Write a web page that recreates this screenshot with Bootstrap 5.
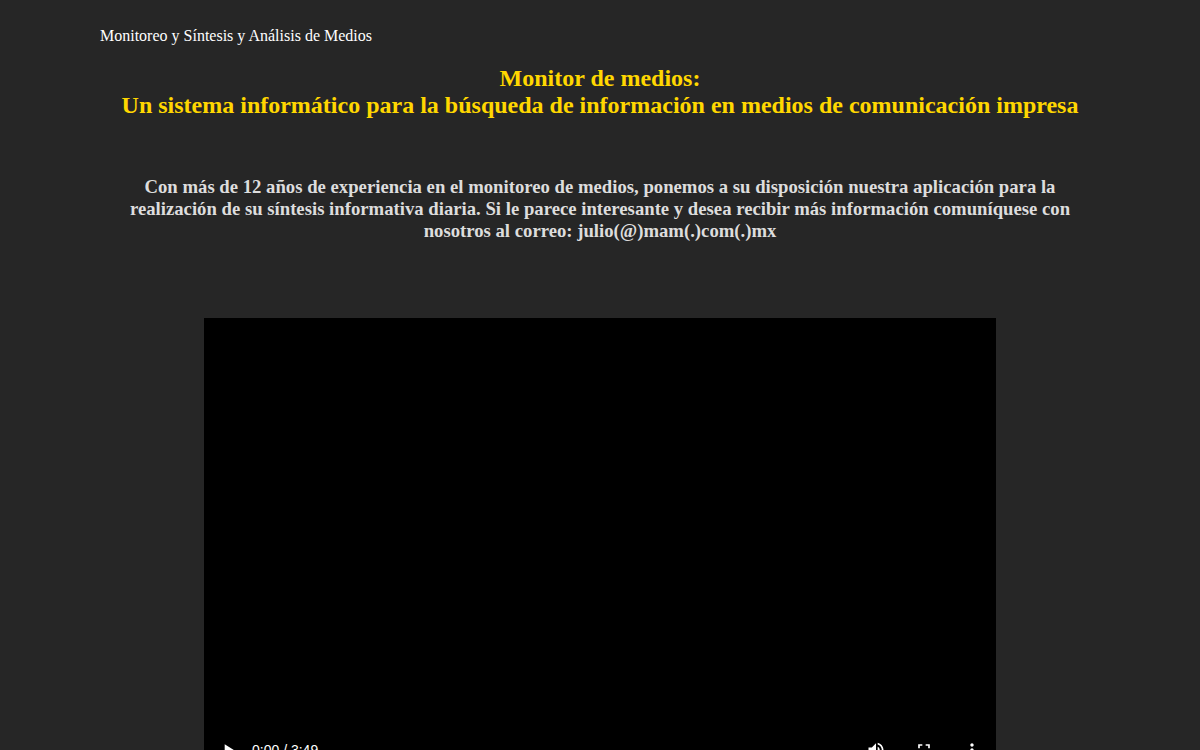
<!DOCTYPE html>
<html lang="es">
<head>
<meta charset="utf-8">
<meta name="viewport" content="width=device-width, initial-scale=1">
<title>Monitoreo y Síntesis y Análisis de Medios</title>
<link href="https://cdn.jsdelivr.net/npm/bootstrap@5.3.0/dist/css/bootstrap.min.css" rel="stylesheet">
<style>
  body { background: #262626; color: #fff; font-family: "Liberation Serif", "Times New Roman", serif; font-size: 16px; line-height: 18px; }
  .page { max-width: 1000px; padding-top: 27px; }
  .headline { color: #ffd700; font-size: 24px; line-height: 27px; margin: 20px 0 57px; }
  .intro { color: #ddd; font-size: 1.17em; line-height: 22px; margin: 0 0 76px; }
  .player { width: 66vw; min-width: 280px; background: #000; padding: 408px 8px 0; font-family: "Liberation Sans", Arial, sans-serif; }
  .player .controls { height: 48px; }
  .control { width: 32px; height: 48px; padding: 0; border: 0; background: none; color: #fff; }
  .control svg { display: block; margin: auto; fill: currentColor; }
  .time { font-size: 14px; line-height: 20px; }
  .seek { height: 20px; padding: 0 8px 12px; }
  .seek input { display: block; width: 100%; height: 4px; appearance: none; background: #555; border-radius: 2px; }
  .seek input::-webkit-slider-thumb { appearance: none; width: 4px; height: 4px; background: #fff; }
</style>
</head>
<body>
<main class="page container-fluid px-0">
  <p class="m-0">Monitoreo y Síntesis y Análisis de Medios</p>
  <h1 class="headline fw-bold text-center">Monitor de medios:<br>Un sistema informático para la búsqueda de información en medios de comunicación impresa</h1>
  <h2 class="intro fw-bold text-center">Con más de 12 años de experiencia en el monitoreo de medios, ponemos a su disposición nuestra aplicación para la realización de su síntesis informativa diaria. Si le parece interesante y desea recibir más información comuníquese con nosotros al correo: julio(@)mam(.)com(.)mx</h2>
  <section class="player mx-auto" aria-label="Video">
    <div class="controls d-flex align-items-center">
      <button class="control" type="button" aria-label="Reproducir"><svg width="20" height="20" viewBox="0 0 24 24"><path d="M8 5v14l11-7z"/></svg></button>
      <span class="time ms-2 me-auto">0:00 / 3:49</span>
      <div class="d-flex gap-3">
        <button class="control" type="button" aria-label="Silenciar"><svg width="20" height="20" viewBox="0 0 24 24"><path d="M3 9v6h4l5 5V4L7 9H3zm13.500 3c0-1.770-1.020-3.290-2.500-4.030v8.050c1.480-.73 2.500-2.250 2.500-4.020zM14 3.230v2.060c2.890.86 5 3.540 5 6.710s-2.110 5.850-5 6.710v2.060c4.010-.91 7-4.490 7-8.770s-2.990-7.860-7-8.770z"/></svg></button>
        <button class="control" type="button" aria-label="Pantalla completa"><svg width="20" height="20" viewBox="0 0 24 24"><path d="M7 14H5v5h5v-2H7v-3zm-2-4h2V7h3V5H5v5zm12 7h-3v2h5v-5h-2v3zM14 5v2h3v3h2V5h-5z"/></svg></button>
        <button class="control" type="button" aria-label="Más opciones"><svg width="20" height="20" viewBox="0 0 24 24"><path d="M12 8c1.100 0 2-.9 2-2s-.9-2-2-2-2 .9-2 2 .9 2 2 2zm0 2c-1.100 0-2 .9-2 2s.9 2 2 2 2-.9 2-2-.9-2-2-2zm0 6c-1.100 0-2 .9-2 2s.9 2 2 2 2-.9 2-2-.9-2-2-2z"/></svg></button>
      </div>
    </div>
    <div class="seek"><input type="range" min="0" max="229" value="0" aria-label="Posición del video"></div>
  </section>
</main>
<script src="https://cdn.jsdelivr.net/npm/bootstrap@5.3.0/dist/js/bootstrap.bundle.min.js"></script>
</body>
</html>
